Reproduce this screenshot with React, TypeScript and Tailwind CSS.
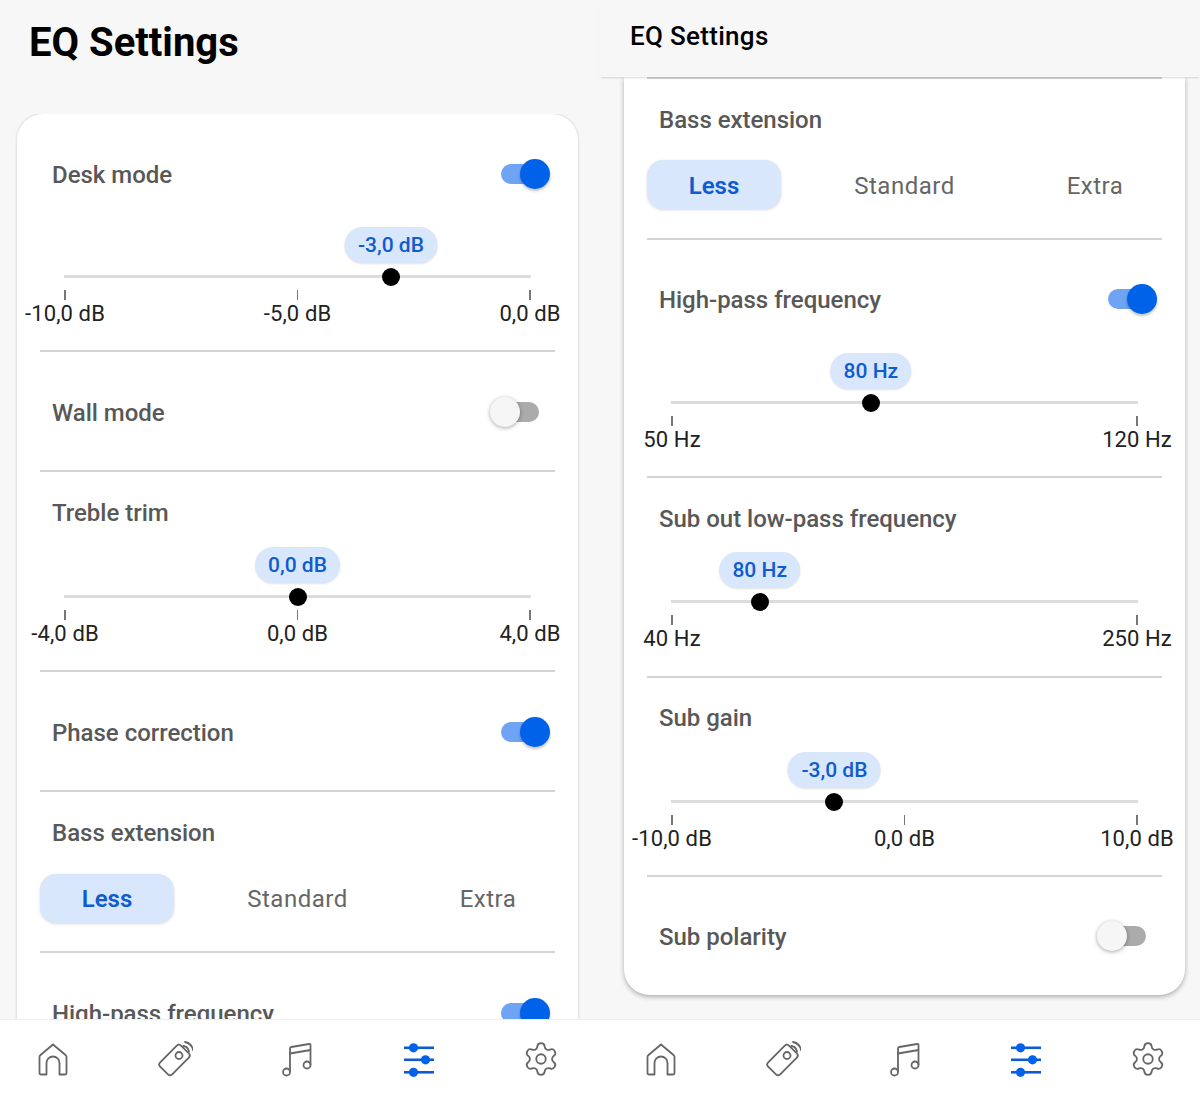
import React from "react";
import { Settings } from "lucide-react";

function Divider() {
  return <div className="mx-[23px] h-[2px] bg-[#d4d4d4]" />;
}

function Toggle({ on }: { on: boolean }) {
  return (
    <div className="relative h-[20px] w-[38px] rounded-full">
      <div className={on ? "h-full w-full rounded-full bg-[#6fa3f4]" : "h-full w-full rounded-full bg-[#ababab]"} />
      <div
        className={
          on
            ? "absolute -right-[11px] -top-[5px] h-[30px] w-[30px] rounded-full bg-[#0062e8] shadow-[0_2px_3px_rgba(0,0,0,0.25)]"
            : "absolute -left-[11px] -top-[5px] h-[30px] w-[30px] rounded-full bg-[#f6f6f6] shadow-[0_1px_4px_rgba(0,0,0,0.35)]"
        }
      />
    </div>
  );
}

function ToggleRow({ label, on, up }: { label: string; on: boolean; up?: boolean }) {
  return (
    <div className={up ? "flex h-[118px] items-center justify-between pl-[35px] pr-[39px]" : "flex h-[118px] items-center justify-between pl-[35px] pr-[39px] pt-[2px]"}>
      <span className="mt-[1px] text-[24px] font-medium tracking-[-0.02px] text-[#585858]">{label}</span>
      <Toggle on={on} />
    </div>
  );
}

function Slider({ value, pct, ticks }: { value: string; pct: number; ticks: string[] }) {
  return (
    <div className="px-[47px]">
      <div className="relative h-[58px]">
        <div
          className="absolute top-0 -translate-x-1/2 whitespace-nowrap rounded-full bg-[#d9e7fc] px-[13.5px] py-[4px] text-[21px] font-medium leading-[28px] text-[#0f5bd0] shadow-[0_1px_2px_rgba(0,0,0,0.12)]"
          style={{ left: `${pct}%` }}
        >
          {value}
        </div>
        <div className="absolute left-0 right-0 top-[48px] h-[3px] bg-[#dcdcdc]" />
        <div
          className="absolute top-[41px] h-[18px] w-[18px] -translate-x-1/2 rounded-full bg-black"
          style={{ left: `${pct}%` }}
        />
      </div>
      <div className="mt-[5px] flex justify-between px-px">
        {ticks.map((t) => (
          <div key={t} className="flex w-0 flex-col items-center">
            <div className="h-[10px] w-[1.5px] shrink-0 bg-[#777777]" />
            <span className="whitespace-nowrap text-[22px] leading-[27px] tracking-[0.1px] text-[#222222]">{t}</span>
          </div>
        ))}
      </div>
    </div>
  );
}

function TitledSlider(props: { label: string; value: string; pct: number; ticks: string[]; rowCls: string; gapCls: string }) {
  return (
    <div className={props.rowCls}>
      <div className="pl-[35px] text-[24px] font-medium leading-[36px] tracking-[-0.02px] text-[#585858]">{props.label}</div>
      <div className={props.gapCls}>
        <Slider value={props.value} pct={props.pct} ticks={props.ticks} />
      </div>
    </div>
  );
}

function ToggleSlider(props: { label: string; value: string; pct: number; ticks: string[]; up?: boolean }) {
  return (
    <div className="h-[236px]">
      <ToggleRow label={props.label} on up={props.up} />
      <div className="-mt-[5px]">
        <Slider value={props.value} pct={props.pct} ticks={props.ticks} />
      </div>
    </div>
  );
}

function Bass({ right }: { right?: boolean }) {
  const optionBase = right
    ? "flex h-[49px] w-[134px] items-center justify-center pt-[2px] text-[24px] tracking-[0.5px] text-[#666666]"
    : "flex h-[49px] w-[134px] items-center justify-center text-[24px] tracking-[0.5px] text-[#666666]";
  const active = right
    ? "flex h-[49px] w-[134px] items-center justify-center rounded-[16px] bg-[#d9e7fc] pt-[2px] text-[24px] font-semibold text-[#0f5bd0] shadow-[0_1px_3px_rgba(0,0,0,0.15)]"
    : "flex h-[49px] w-[134px] items-center justify-center rounded-[16px] bg-[#d9e7fc] text-[24px] font-semibold text-[#0f5bd0] shadow-[0_1px_3px_rgba(0,0,0,0.15)]";
  return (
    <div className="h-[159px] pt-[23px]">
      <div className="pl-[35px] text-[24px] font-medium leading-[36px] tracking-[-0.02px] text-[#585858]">Bass extension</div>
      <div className={right ? "mx-[23px] mt-[22px] flex justify-between" : "mx-[23px] mt-[23px] flex justify-between"}>
        <div className={active}>Less</div>
        <div className={optionBase}>Standard</div>
        <div className={optionBase}>Extra</div>
      </div>
    </div>
  );
}

function Nav({ cls }: { cls: string }) {
  const gray = "#666666";
  const blue = "#0f5bd0";
  return (
    <nav className={cls}>
      <svg width="36" height="36" viewBox="0 0 36 36" fill="none" stroke={gray} strokeWidth="1.8" strokeLinejoin="round">
        <path d="M18 3.5 L30.5 14 a2.5 2.5 0 0 1 1 2 V32 a1.5 1.5 0 0 1 -1.5 1.5 H24.5 V22 a6.5 6.5 0 0 0 -13 0 V33.5 H6 a1.5 1.5 0 0 1 -1.5 -1.5 V16 a2.5 2.5 0 0 1 1 -2 Z" />
      </svg>
      <svg width="36" height="36" viewBox="-1 0 36 36" fill="none" stroke={gray} strokeWidth="1.8" strokeLinecap="round">
        <rect x="8" y="4.25" width="17" height="29.5" rx="3" transform="rotate(45 16.5 19)" />
        <circle cx="21" cy="14.5" r="3.5" />
        <path d="M25.5 5 a7 7 0 0 1 5.5 5.5" />
        <path d="M27 1 a10 10 0 0 1 8 8" />
      </svg>
      <svg width="36" height="36" viewBox="0 0 36 36" fill="none" stroke={gray} strokeWidth="1.8" strokeLinejoin="round">
        <circle cx="7.5" cy="31" r="3.5" />
        <circle cx="28" cy="24" r="3.5" />
        <path d="M11 31 V7.5 a1.5 1.5 0 0 1 1.3 -1.5 L30 3 a1 1 0 0 1 1.5 1 V24" />
        <path d="M11 12.5 L31.5 9" />
      </svg>
      <svg width="36" height="36" viewBox="0 0 36 36" fill={blue}>
        <rect x="3" y="5.5" width="30" height="2.6" />
        <rect x="3" y="17.5" width="30" height="2.6" />
        <rect x="3" y="30" width="30" height="2.6" />
        <circle cx="12.5" cy="6.8" r="4.6" fill="#0062e8" />
        <circle cx="24.5" cy="18.8" r="4.6" fill="#0062e8" />
        <circle cx="12.5" cy="31.3" r="4.6" fill="#0062e8" />
      </svg>
      <Settings size={38} strokeWidth={1.15} color={gray} className="-mx-px" />
    </nav>
  );
}

const deskTicks = ["-10,0 dB", "-5,0 dB", "0,0 dB"];

export default function App() {
  return (
    <div className="flex h-[1095px] w-[1200px] overflow-hidden bg-[#f7f7f7] font-['Roboto',sans-serif]">
      <section className="flex h-full w-[600px] flex-col">
        <header className="h-[114px] shrink-0 pl-[29px] pt-[16px] text-[40px] font-bold leading-[54px] text-black">EQ Settings</header>
        <div className="min-h-0 flex-1 overflow-hidden">
          <div className="ml-[17px] w-[561px] rounded-t-[26px] bg-white shadow-[0_0_3px_rgba(0,0,0,0.2)]">
            <ToggleSlider label="Desk mode" value="-3,0 dB" pct={70} ticks={deskTicks} />
            <Divider />
            <ToggleRow label="Wall mode" on={false} />
            <Divider />
            <TitledSlider rowCls="h-[198px] pt-[23px]" gapCls="mt-[16px]" label="Treble trim" value="0,0 dB" pct={50} ticks={["-4,0 dB", "0,0 dB", "4,0 dB"]} />
            <Divider />
            <ToggleRow label="Phase correction" on />
            <Divider />
            <Bass />
            <Divider />
            <ToggleRow label="High-pass frequency" on />
          </div>
        </div>
        <Nav cls="flex h-[76px] shrink-0 items-center justify-between border-t border-[#efefef] bg-white pl-[35px] pr-[41px] pt-[3px]" />
      </section>
      <section className="flex h-full w-[600px] flex-col">
        <header className="relative z-10 h-[77px] shrink-0 bg-[#f7f7f7] pl-[30px] pt-[19px] text-[26px] font-medium leading-[34px] tracking-[0.3px] text-black shadow-[0_2px_2px_-1px_rgba(0,0,0,0.15)]">EQ Settings</header>
        <div className="min-h-0 flex-1 overflow-hidden">
          <div className="ml-[24px] w-[561px] rounded-b-[26px] bg-white shadow-[0_2px_5px_rgba(0,0,0,0.3)]">
            <Divider />
            <Bass right />
            <Divider />
            <ToggleSlider up label="High-pass frequency" value="80 Hz" pct={42.8} ticks={["50 Hz", "120 Hz"]} />
            <Divider />
            <TitledSlider rowCls="h-[198px] pt-[23px]" gapCls="mt-[15px]" label="Sub out low-pass frequency" value="80 Hz" pct={19} ticks={["40 Hz", "250 Hz"]} />
            <Divider />
            <TitledSlider rowCls="h-[197px] pt-[22px]" gapCls="mt-[16px]" label="Sub gain" value="-3,0 dB" pct={35} ticks={["-10,0 dB", "0,0 dB", "10,0 dB"]} />
            <Divider />
            <ToggleRow up label="Sub polarity" on={false} />
          </div>
        </div>
        <Nav cls="flex h-[76px] shrink-0 items-center justify-between border-t border-[#efefef] bg-white pl-[43px] pr-[34px] pt-[3px]" />
      </section>
    </div>
  );
}
